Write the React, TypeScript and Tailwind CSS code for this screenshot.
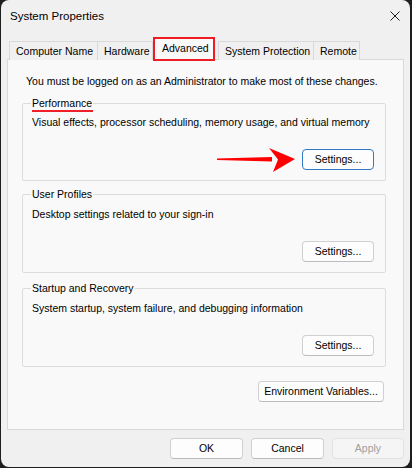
const font = { fontFamily: '"Liberation Sans", Arial, sans-serif' };

function Btn({
  label,
  w,
  focused,
  disabled,
}: {
  label: string;
  w: string;
  focused?: boolean;
  disabled?: boolean;
}) {
  return (
    <button
      className={
        "h-[21px] whitespace-nowrap rounded-[4px] border text-[10.5px] leading-none " +
        w +
        " " +
        (focused
          ? "border-[#2f7ac4] bg-[#fdfdfd] text-black"
          : disabled
            ? "border-[#e2e2e2] bg-[#f5f5f5] text-[#a0a0a0]"
            : "border-[#d0d0d0] border-b-[#bcbcbc] bg-[#fdfdfd] text-black")
      }
    >
      {label}
    </button>
  );
}

function Arrow() {
  return (
    <svg width="80" height="26" viewBox="0 0 80 26" className="-my-[3px] mr-[5px] shrink-0">
      <polygon points="0,11.5 55,10 55,14.5 0,13" fill="#ff0000" />
      <polygon points="52,1 78,12 56,25 61,12.5" fill="#ff0000" />
    </svg>
  );
}

function Group({
  title,
  desc,
  mark,
  children,
  className,
  descCls,
}: {
  title: string;
  desc: string;
  mark?: boolean;
  children: React.ReactNode;
  className?: string;
  descCls?: string;
}) {
  return (
    <fieldset
      className={"rounded-[2px] border border-[#dcdcdc] px-[9px] pb-[10px] " + (className ?? "")}
    >
      <legend className="relative -ml-[1px] whitespace-nowrap px-[1px] text-[10.5px] leading-[14px]">
        {title}
        {mark && (
          <span className="absolute left-[1px] right-0 top-[14px] h-[2px] bg-[#f0202a]" />
        )}
      </legend>
      <p className={"whitespace-nowrap text-[10.5px] leading-[14px] " + (descCls ?? "pt-[5px]")}>
        {desc}
      </p>
      <div className="mt-[20px] flex h-[21px] items-center justify-end pr-[2px]">{children}</div>
    </fieldset>
  );
}

const tabCls =
  "h-[19px] whitespace-nowrap border border-b-0 border-[#d9d9d9] bg-[#f0f0f0] pt-[2px] text-[10.5px] leading-[14px]";

export default function App() {
  return (
    <div className="h-[468px] w-[412px] overflow-hidden bg-[#1e1e1e]" style={font}>
      <div className="ml-[1px] flex h-[467px] w-[409px] flex-col rounded-[8px] bg-[#f0f0f0] text-black">
        {/* title bar */}
        <div className="flex h-[37px] items-start justify-between pl-[9px] pr-[10px] pt-[8px]">
          <span className="text-[11.5px] leading-[16px]">System Properties</span>
          <svg width="10" height="10" viewBox="0 0 10 10" className="mt-[3px]">
            <path d="M0.5 0.5 L9.5 9.5 M9.5 0.5 L0.5 9.5" stroke="#1a1a1a" strokeWidth="1" />
          </svg>
        </div>

        {/* tabs */}
        <div className="relative z-10 flex h-[23px] items-end pl-[8px]">
          <div className={tabCls + " -mr-[1px] w-[89px] pl-[6px]"}>Computer Name</div>
          <div className={tabCls + " w-[56px] pl-[6px]"}>Hardware</div>
          <div className="-mb-[1px] h-[24px] w-[62px] whitespace-nowrap border-2 border-[#ee1c25] bg-[#f9f9f9] pl-[7px] pt-[2px] text-[10.5px] leading-[14px]">
            Advanced
          </div>
          <div className={tabCls + " -mr-[1px] ml-[3px] w-[96px] pl-[6px]"}>System Protection</div>
          <div className={tabCls + " w-[47px] pl-[6px]"}>Remote</div>
        </div>

        {/* panel */}
        <div className="mx-[6px] -mt-[1px] flex h-[371px] flex-col border border-[#d9d9d9] bg-[#f9f9f9] pl-[14px] pr-[17px] pt-[14px]">
          <p className="whitespace-nowrap pl-[4px] text-[10.5px] leading-[14px]">
            You must be logged on as an Administrator to make most of these changes.
          </p>

          <Group
            className="mt-[8px]"
            title="Performance"
            mark
            desc="Visual effects, processor scheduling, memory usage, and virtual memory"
          >
            <Arrow />
            <Btn label="Settings..." w="w-[72px]" focused />
          </Group>

          <Group
            className="mt-[6px]"
            descCls="pt-[6px]"
            title="User Profiles"
            desc="Desktop settings related to your sign-in"
          >
            <Btn label="Settings..." w="w-[72px]" />
          </Group>

          <Group
            className="mt-[8px]"
            descCls="pt-[6px]"
            title="Startup and Recovery"
            desc="System startup, system failure, and debugging information"
          >
            <Btn label="Settings..." w="w-[72px]" />
          </Group>

          <div className="mt-[14px] flex justify-end pr-[2px]">
            <Btn label="Environment Variables..." w="w-[126px]" />
          </div>
        </div>

        {/* footer */}
        <div className="flex justify-end gap-[8px] pr-[6px] pt-[8px]">
          <Btn label="OK" w="w-[73px]" />
          <Btn label="Cancel" w="w-[73px]" />
          <Btn label="Apply" w="w-[72px]" disabled />
        </div>
      </div>
    </div>
  );
}
